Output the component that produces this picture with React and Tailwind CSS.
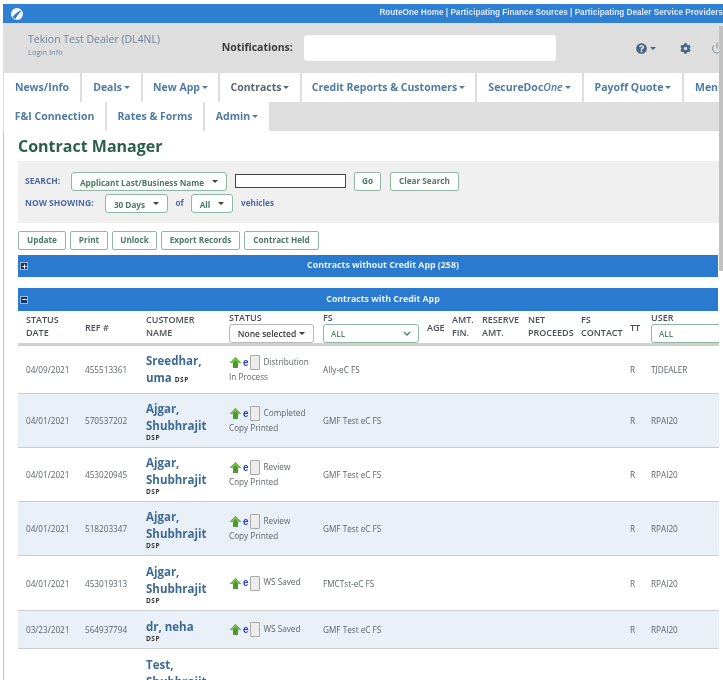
import { FaQuestionCircle, FaCog, FaPlus, FaMinus } from "react-icons/fa";
import { FiPower } from "react-icons/fi";

const FONT = "font-['Open_Sans',sans-serif]";

const ROW1 = [
  { label: "News/Info", w: "w-[76px]" },
  { label: "Deals", w: "w-[59px]", caret: true },
  { label: "New App", w: "w-[75px]", caret: true },
  { label: "Contracts", w: "w-[80px]", caret: true, active: true },
  { label: "Credit Reports & Customers", w: "w-[173px]", caret: true },
  { label: "SecureDoc", em: "One", w: "w-[105px]", caret: true },
  { label: "Payoff Quote", w: "w-[98px]", caret: true },
  { label: "Menu", w: "w-[80px] justify-start pl-[11px]" },
];

const ROW2 = [
  { label: "F&I Connection", w: "w-[101px]" },
  { label: "Rates & Forms", w: "w-[96px]" },
  { label: "Admin", w: "w-[64px]", caret: true },
];

const ROWS = [
  { date: "04/09/2021", ref: "455513361", name: ["Sreedhar,"], tail: "uma", status: "Distribution", sub: "In Process", fs: "Ally-eC FS", user: "TJDEALER", h: "h-[48px]" },
  { date: "04/01/2021", ref: "570537202", name: ["Ajgar,", "Shubhrajit"], status: "Completed", sub: "Copy Printed", fs: "GMF Test eC FS", user: "RPAI20", h: "h-[54px]", alt: true },
  { date: "04/01/2021", ref: "453020945", name: ["Ajgar,", "Shubhrajit"], status: "Review", sub: "Copy Printed", fs: "GMF Test eC FS", user: "RPAI20", h: "h-[54px]" },
  { date: "04/01/2021", ref: "518203347", name: ["Ajgar,", "Shubhrajit"], status: "Review", sub: "Copy Printed", fs: "GMF Test eC FS", user: "RPAI20", h: "h-[54px]", alt: true },
  { date: "04/01/2021", ref: "453019313", name: ["Ajgar,", "Shubhrajit"], status: "WS Saved", fs: "FMCTst-eC FS", user: "RPAI20", h: "h-[55px]" },
  { date: "03/23/2021", ref: "564937794", name: ["dr, neha"], status: "WS Saved", fs: "GMF Test eC FS", user: "RPAI20", h: "h-[38px]", alt: true },
];

const GRID = "grid grid-cols-[59px_61px_83px_94px_104px_25px_30px_46px_53px_49px_21px_72px]";

function Caret({ className = "" }) {
  return <span className={`inline-block ml-[2px] w-0 h-0 border-x-[3px] border-x-transparent border-t-[3px] border-t-current align-middle ${className}`} />;
}

function Tab({ t }) {
  return (
    <div className={`${t.w} shrink-0 h-full bg-white flex items-center justify-center text-[10.5px] font-bold whitespace-nowrap ${t.active ? "text-[#5c6670]" : "text-[#4f7ba6]"}`}>
      {t.label}
      {t.em && <em className="font-semibold">{t.em}</em>}
      {t.caret && <Caret />}
    </div>
  );
}

function GreenBtn({ w = "px-[8px]", children }) {
  return (
    <button className={`${w} h-[19px] bg-white border border-[#8fb8a4] rounded-[2px] text-[8.2px] font-bold text-[#4a7a63] whitespace-nowrap`}>
      {children}
    </button>
  );
}

function Select({ w, children }) {
  return (
    <div className={`${w} h-[19px] pt-[3px] bg-white border border-[#8fb8a4] rounded-[3px] flex items-center justify-center text-[8.2px] font-bold text-[#4a7a63] whitespace-nowrap`}>
      {children}
      <Caret className="ml-[8px] -mt-[3px] text-[#33473d]" />
    </div>
  );
}

function Bar({ h, icon, children }) {
  return (
    <div className={`${h} w-[700px] bg-[#2a7ad0] flex items-center relative`}>
      <span className="absolute left-[2px] w-[8px] h-[8px] bg-[#16355f] border border-[#9db8d8] flex items-center justify-center text-white">{icon}</span>
      <span className="w-full text-center text-[8.8px] font-bold text-[#e8f1fb] pl-[30px]">{children}</span>
    </div>
  );
}

function StatusCell({ status, sub }) {
  return (
    <div className="text-[8.2px] text-[#5f6468] leading-[14px]">
      <div className="flex items-center">
        <svg width="13" height="13" viewBox="0 0 13 13" className="shrink-0">
          <path d="M6.5 1 L12.5 7 H9 V12 H4 V7 H0.5 Z" fill="#4a9a30" />
          <path d="M6.5 1 L12.5 7 H9 L6.5 4 L4 7 H0.5 Z" fill="#78bd4c" />
        </svg>
        <span className="text-[10px] font-bold text-[#2a3fc8] leading-none ml-[1px] font-['Liberation_Sans',sans-serif]">e</span>
        <span className="w-[10px] h-[15px] bg-[#ececec] border border-[#a9a9a9] rounded-[1px] ml-[1px] mr-[4px] shrink-0" />
        <span className="-mt-[2px]">{status}</span>
      </div>
      {sub && <div>{sub}</div>}
    </div>
  );
}

function CustomerCell({ name, tail }) {
  return (
    <div className="text-[11.5px] font-bold text-[#3d6a94] leading-[17px]">
      {name.map((n) => <div key={n}>{n}</div>)}
      {tail ? (
        <div>{tail} <span className="text-[6.5px] font-bold tracking-[0.5px] text-[#333]">DSP</span></div>
      ) : (
        <div className="text-[6.5px] font-bold tracking-[0.5px] text-[#333] leading-[7px]">DSP</div>
      )}
    </div>
  );
}

export default function App() {
  return (
    <div className={`${FONT} w-[723px] h-[680px] overflow-hidden relative bg-white pt-[4px] blur-[0.35px]`}>
      {/* top blue strip */}
      <div className="h-[19px] ml-[3px] bg-[#2f7fd3] flex items-center justify-between pl-[8px]">
        <svg width="12" height="12" viewBox="0 0 12 12">
          <circle cx="6" cy="6" r="6" fill="#f4f8fc" />
          <path d="M1.5 9.5 C4 5.5 7 3 11 2.5 C8 5 6 7.5 4.5 11 Z" fill="#2f7fd3" />
        </svg>
        <div className="text-[8.2px] font-bold text-[#dce9f7] whitespace-nowrap font-['Liberation_Sans',sans-serif]">
          RouteOne Home | Participating Finance Sources | Participating Dealer Service Providers
        </div>
      </div>

      <div className="ml-[3px] bg-[#dedede]">
        {/* dealer header */}
        <div className="h-[50px] flex items-center">
          <div className="w-[219px] pl-[25px] pb-[6px]">
            <div className="text-[10.5px] text-[#6d84a0] leading-[14px]">Tekion Test Dealer (DL4NL)</div>
            <div className="text-[7.5px] text-[#6d84a0] leading-[12px]">Login Info</div>
          </div>
          <div className="w-[81px] text-[10.5px] font-bold text-[#3a3a3a]">Notifications:</div>
          <div className="w-[252px] h-[26px] ml-[2px] bg-white rounded-[3px]" />
          <div className="flex items-center text-[#4a6583] ml-[80px]">
            <FaQuestionCircle size={11} />
            <Caret className="ml-[3px]" />
            <FaCog size={11} className="ml-[24px]" />
            <FiPower size={12} className="ml-[20px] text-[#7f8c99]" />
          </div>
        </div>

        {/* nav tabs */}
        <div className="h-[29px] flex gap-[2px] pl-[1px] overflow-hidden">
          {ROW1.map((t) => <Tab key={t.label} t={t} />)}
        </div>
        <div className="h-[29px] flex gap-[2px] pl-[1px]">
          {ROW2.map((t) => <Tab key={t.label} t={t} />)}
        </div>
      </div>

      {/* content */}
      <div className="ml-[3px] border-l border-[#c4c4c4] pl-[14px]">
        <h1 className="h-[30px] flex items-center text-[16px] font-bold text-[#2a6049]">Contract Manager</h1>

        <div className="h-[62px] -mr-[4px] bg-[#f0f0f0] rounded-l-[3px] pl-[7px] pt-[11px]">
          <div className="flex items-center h-[19px]">
            <span className="w-[46px] text-[8.5px] font-bold text-[#4d6aa3]">SEARCH:</span>
            <Select w="w-[156px]">Applicant Last/Business Name</Select>
            <div className="w-[111px] h-[14px] -mt-[2px] ml-[8px] bg-white border border-[#444]" />
            <div className="flex gap-[9px] ml-[8px]">
              <GreenBtn w="w-[27px]">Go</GreenBtn>
              <GreenBtn w="w-[69px]">Clear Search</GreenBtn>
            </div>
          </div>
          <div className="flex items-center h-[19px] mt-[3px]">
            <span className="w-[80px] text-[8.5px] font-bold text-[#4d6aa3]">NOW SHOWING:</span>
            <Select w="w-[63px]">30 Days</Select>
            <span className="w-[23px] text-center text-[8.2px] font-bold text-[#4d6aa3]">of</span>
            <Select w="w-[42px]">All</Select>
            <span className="ml-[8px] text-[8.2px] font-bold text-[#4d6aa3]">vehicles</span>
          </div>
        </div>

        <div className="flex gap-[4px] mt-[8px] mb-[5px]">
          <GreenBtn w="w-[48px]">Update</GreenBtn>
          <GreenBtn w="w-[38px]">Print</GreenBtn>
          <GreenBtn w="w-[45px]">Unlock</GreenBtn>
          <GreenBtn w="w-[79px]">Export Records</GreenBtn>
          <GreenBtn w="w-[75px]">Contract Held</GreenBtn>
        </div>

        <Bar h="h-[22px]" icon={<FaPlus size={5} />}>Contracts without Credit App (258)</Bar>
        <div className="h-[11px]" />
        <Bar h="h-[23px]" icon={<FaMinus size={5} />}>Contracts with Credit App</Bar>

        {/* table */}
        <div className="w-[720px]">
          <div className={`${GRID} h-[35px] pl-[8px] border-b-[3px] border-[#cfcfcf] text-[9px] font-semibold text-[#4a4f55] leading-[13px] items-center`}>
            <div className="pb-[2px]">STATUS<br />DATE</div>
            <div>REF #</div>
            <div className="pb-[2px]">CUSTOMER<br />NAME</div>
            <div className="self-start">
              <div className="h-[13px]">STATUS</div>
              <div className="w-[85px] h-[19px] bg-white border border-[#b9b9b9] rounded-[3px] flex items-center justify-center text-[8.5px] font-semibold text-[#3a3a3a]">
                None selected<Caret className="ml-[3px]" />
              </div>
            </div>
            <div className="self-start">
              <div className="h-[13px]">FS</div>
              <div className="w-[96px] h-[19px] bg-white border border-[#8fb8a4] rounded-[3px] flex items-center justify-between px-[7px] text-[8px] font-semibold text-[#4a8a63]">
                ALL
                <svg width="8" height="5" viewBox="0 0 8 5"><path d="M1 1 L4 4 L7 1" fill="none" stroke="#4a7a63" strokeWidth="1.3" /></svg>
              </div>
            </div>
            <div>AGE</div>
            <div className="pb-[2px]">AMT.<br />FIN.</div>
            <div className="pb-[2px]">RESERVE<br />AMT.</div>
            <div className="pb-[2px]">NET<br />PROCEEDS</div>
            <div className="pb-[2px]">FS<br />CONTACT</div>
            <div>TT</div>
            <div className="self-start">
              <div className="h-[13px]">USER</div>
              <div className="w-[72px] h-[19px] bg-white border border-[#8fb8a4] rounded-[3px] flex items-center px-[7px] text-[8px] font-semibold text-[#4a8a63]">ALL</div>
            </div>
          </div>

          {ROWS.map((r) => (
            <div key={r.ref} className={`${GRID} ${r.h} pl-[8px] items-center text-[8.2px] text-[#5f6468] border-b border-[#c9ced3] ${r.alt ? "bg-[#e9f0f8]" : "bg-white"}`}>
              <div className="pt-[2px]">{r.date}</div>
              <div className="pt-[2px]">{r.ref}</div>
              <CustomerCell name={r.name} tail={r.tail} />
              <StatusCell status={r.status} sub={r.sub} />
              <div className="pt-[2px]">{r.fs}</div>
              <div /><div /><div /><div /><div />
              <div className="pt-[2px]">R</div>
              <div className="pt-[2px]">{r.user}</div>
            </div>
          ))}

          <div className="pl-[8px] pt-[7px] pb-[20px] grid grid-cols-[59px_61px_83px]">
            <div /><div />
            <div className="text-[11.5px] font-bold text-[#3d6a94] leading-[17px]">Test,<br />Shubhrajit</div>
          </div>
        </div>
      </div>

      {/* page scrollbar */}
      <div className="absolute right-0 top-[26px] bottom-0 w-[4px] bg-white">
        <div className="h-[245px] bg-[#c1c1c1]" />
      </div>
    </div>
  );
}
